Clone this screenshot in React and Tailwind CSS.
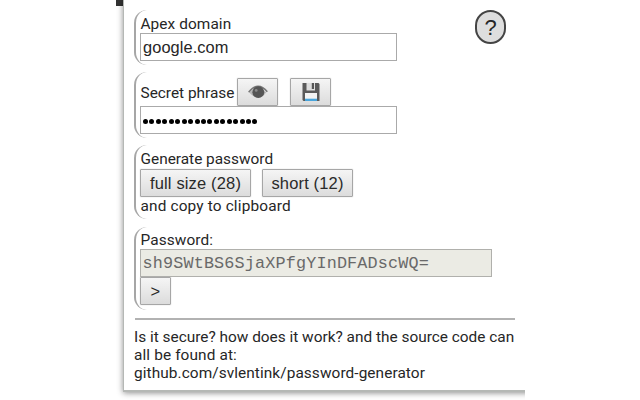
const buttonClass =
  "flex h-7 shrink-0 items-center justify-center rounded-[1px] border border-[#a6a6a6] bg-linear-to-b from-[#f5f5f5] to-[#dcdcdc] font-['Liberation_Sans',sans-serif] text-[16.5px] tracking-[0.16px] text-[#2a2a2a] shadow-[0_0_1px_#aaa]";
const groupClass =
  "ml-[10px] rounded-l-[13px] border-l-2 border-[#a6a6a6] pl-[4px]";
const labelClass =
  "block whitespace-nowrap pl-[0.5px] text-[15.4px] leading-[18px]";

function EyeIcon() {
  return (
    <svg width="20" height="15" viewBox="0 0 20 15">
      <path d="M.7 7.2C4 3 6.6 1.4 10 1.4s6.3 1.7 9.3 5.4" fill="none" stroke="#777" strokeWidth="1.6" />
      <path d="M1.5 7.8C5 4 7 3.3 10 3.3s5.7 1.3 8.1 4.3C15.6 11 13.1 12.7 10 12.7S4.7 11 1.5 7.8Z" fill="#b5b5b5" />
      <circle cx="10.3" cy="7.2" r="5.9" fill="#555" />
      <circle cx="8.2" cy="5.4" r="1.4" fill="#8a8a8a" />
    </svg>
  );
}

function FloppyIcon() {
  return (
    <svg width="20" height="20" viewBox="0 0 20 20">
      <path d="M1.5 1h16l1 1v17h-16l-1-1Z" fill="#5a5a5a" />
      <path d="M5.5 1H14v7.5H5.5Z" fill="#dedede" />
      <path d="M10.8 1h2.2v6h-2.2Z" fill="#555" />
      <path d="M4 11h12v6H4Z" fill="#f4f4f4" />
      <path d="M4 16.7h12v2.3H4Z" fill="#49a5dc" />
    </svg>
  );
}

export default function App() {
  return (
    <div className="flex h-[400px] w-[640px] overflow-hidden bg-white font-[Roboto,sans-serif] text-[#262626]">
      <div className="ml-[115px] flex h-[400px] w-[410px] overflow-hidden bg-white">
        <div className="ml-px h-[6px] w-[7px] shrink-0 bg-[#333]" />
        <main className="relative h-[392px] w-[420px] shrink-0 border-b-2 border-l border-[#b5b8b5] bg-white pt-[10px] shadow-[0_1px_6px_rgba(0,0,0,0.45)]">
          <section className={`${groupClass} h-[55px] w-[270px] pt-[5px]`}>
            <label className={`${labelClass} tracking-[0.08px]`}>Apex domain</label>
            <div className="flex h-7 w-[257px] items-center border border-[#aaa] bg-white pl-[2px] pt-px font-['Liberation_Sans',sans-serif] text-[16.4px] tracking-[0.08px]">
              google.com
            </div>
          </section>
          <section className={`${groupClass} mt-[7px] h-[66px] w-[270px] pt-[6px]`}>
            <div className="flex h-7 items-center">
              <label className={`${labelClass} w-[97px] shrink-0 pt-[2px]`}>Secret phrase</label>
              <div className={`${buttonClass} w-[41px]`}><EyeIcon /></div>
              <div className={`${buttonClass} ml-[12px] w-[41px]`}><FloppyIcon /></div>
            </div>
            <div className="flex h-7 w-[257px] items-center border border-[#aaa] bg-white pl-[2px] pt-[2px]">
              <div className="flex gap-[1.45px]">
                {Array.from({ length: 18 }, (_, i) => (
                  <span key={i} className="h-[5px] w-[5px] rounded-full bg-black" />
                ))}
              </div>
            </div>
          </section>
          <section className={`${groupClass} mt-[7px] h-[74px] w-[270px] pt-[5px]`}>
            <span className={labelClass}>Generate password</span>
            <div className="mt-px flex gap-[11px]">
              <div className={`${buttonClass} w-[111px]`}>full size (28)</div>
              <div className={`${buttonClass} w-[91px]`}>short (12)</div>
            </div>
            <span className={`${labelClass} tracking-[0.15px]`}>and copy to clipboard</span>
          </section>
          <section className={`${groupClass} mt-[8px] h-[83px] w-[370px] pt-[4px]`}>
            <label className={`${labelClass} tracking-[0.1px]`}>Password:</label>
            <div className="flex h-7 w-[352px] items-center border border-[#b0b0ac] bg-[#ebebe4] pl-[1.5px] pt-px font-['Liberation_Mono',monospace] text-[16.8px] tracking-[0.16px] text-[#696969]">
              sh9SWtBS6SjaXPfgYInDFADscWQ=
            </div>
            <div className={`${buttonClass} w-[31px]`}>&gt;</div>
          </section>
          <hr className="ml-[11px] mt-[8px] h-[2px] w-[380px] border-0 bg-[#b2b2b2]" />
          <footer className="ml-[10px] mt-[8px] whitespace-nowrap text-[15.4px] leading-[18px]">
            <p>Is it secure? how does it work? and the source code can</p>
            <p className="tracking-[0.12px]">all be found at:</p>
            <p className="tracking-[0.08px]">github.com/svlentink/password-generator</p>
          </footer>
          <div className="absolute left-[351px] top-[10px] flex h-[34px] w-[31px] items-center justify-center rounded-full border-2 border-[#444] bg-[#dedede] font-['Liberation_Sans',sans-serif] text-[22px]">
            ?
          </div>
        </main>
      </div>
    </div>
  );
}
